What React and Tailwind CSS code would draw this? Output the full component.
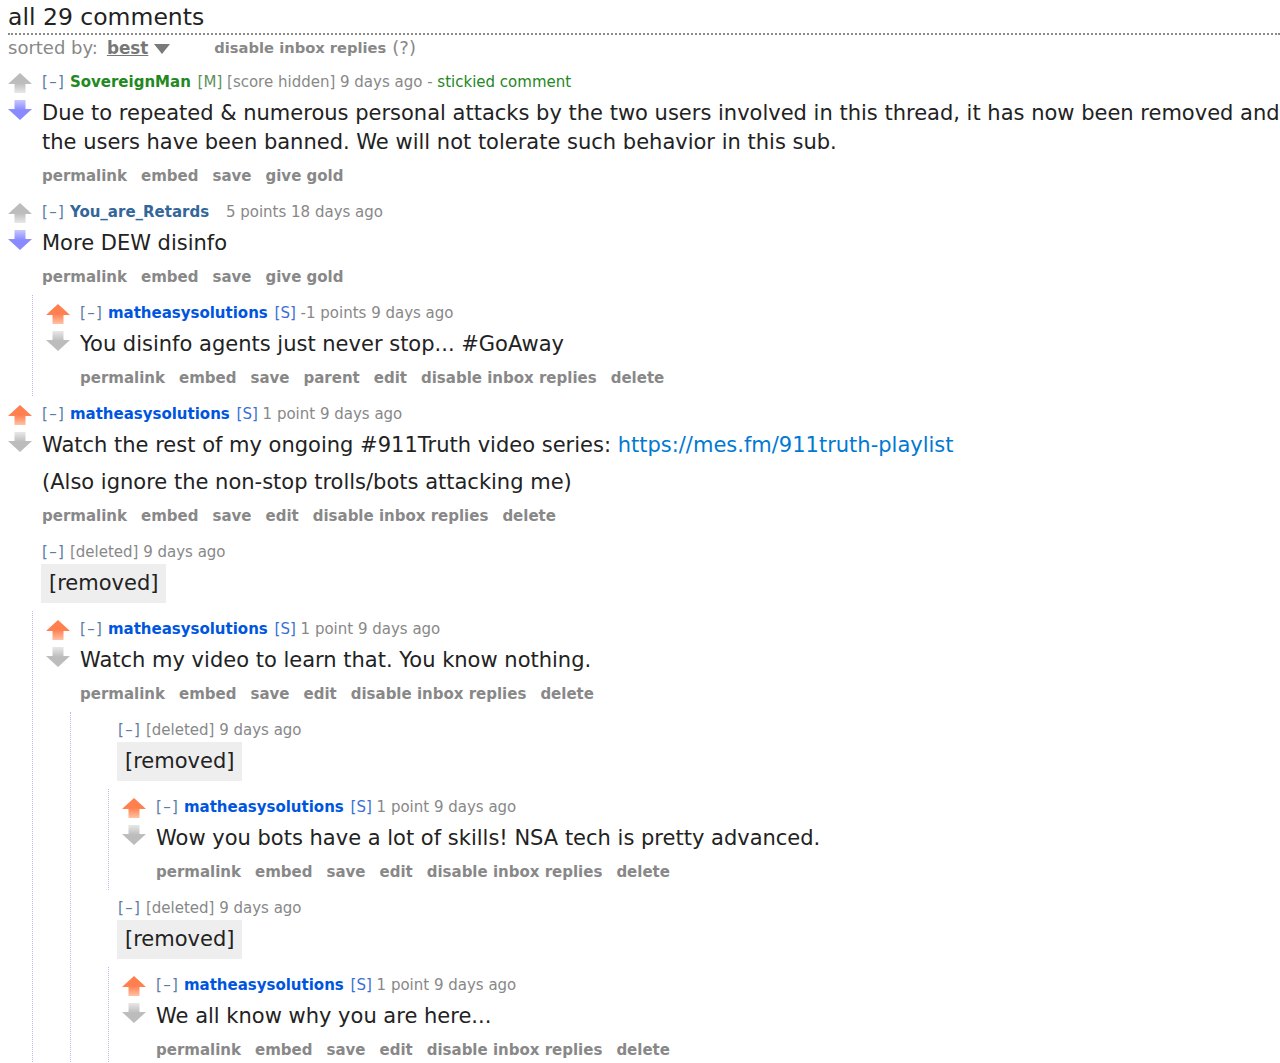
import React, { useId } from "react";

const ARROW = {
  gray: ["#bcbcbc", "#e8e8e8"],
  orange: ["#ff7f4f", "#ffc2a4"],
  purple: ["#8a8aff", "#c8c8ff"],
};

function Arrow({ dir, color }) {
  const raw = useId();
  const id = "g" + raw.replace(/[^a-zA-Z0-9]/g, "");
  const [solid, light] = ARROW[color];
  if (dir === "up") {
    return (
      <svg width="24" height="20" viewBox="0 0 24 20" className="block">
        <defs>
          <linearGradient id={id} x1="0" y1="0" x2="0" y2="1">
            <stop offset="0" stopColor={solid} />
            <stop offset="0.5" stopColor={solid} />
            <stop offset="1" stopColor={light} />
          </linearGradient>
        </defs>
        <path d="M12 0 L24 11 L17.5 11 L17.5 20 L6.5 20 L6.5 11 L0 11 Z" fill={`url(#${id})`} />
      </svg>
    );
  }
  return (
    <svg width="24" height="20" viewBox="0 0 24 20" className="block">
      <defs>
        <linearGradient id={id} x1="0" y1="0" x2="0" y2="1">
          <stop offset="0" stopColor={light} />
          <stop offset="0.5" stopColor={solid} />
          <stop offset="1" stopColor={solid} />
        </linearGradient>
      </defs>
      <path d="M6.5 0 L17.5 0 L17.5 9 L24 9 L12 20 L0 9 L6.5 9 Z" fill={`url(#${id})`} />
    </svg>
  );
}

const OWN = ["permalink", "embed", "save", "edit", "disable inbox replies", "delete"];

const data = [
  {
    author: "SovereignMan",
    authorCls: "text-[#228822]",
    attr: "[M]",
    attrCls: "text-[#5e8f5e]",
    meta: "[score hidden] 9 days ago",
    stickied: true,
    up: "gray",
    down: "purple",
    nowrap: true,
    body: [
      <>
        Due to repeated &amp; numerous personal attacks by the two users involved in this thread, it has now been removed and
        <br />
        the users have been banned. We will not tolerate such behavior in this sub.
      </>,
    ],
    buttons: ["permalink", "embed", "save", "give gold"],
  },
  {
    author: "You_are_Retards",
    authorCls: "text-[#336699]",
    meta: "5 points 18 days ago",
    up: "gray",
    down: "purple",
    body: ["More DEW disinfo"],
    buttons: ["permalink", "embed", "save", "give gold"],
    children: [
      {
        author: "matheasysolutions",
        authorCls: "text-[#0055df]",
        attr: "[S]",
        attrCls: "text-[#3a6fd6]",
        meta: "-1 points 9 days ago",
        up: "orange",
        down: "gray",
        body: ["You disinfo agents just never stop... #GoAway"],
        buttons: ["permalink", "embed", "save", "parent", "edit", "disable inbox replies", "delete"],
      },
    ],
  },
  {
    author: "matheasysolutions",
    authorCls: "text-[#0055df]",
    attr: "[S]",
    attrCls: "text-[#3a6fd6]",
    meta: "1 point 9 days ago",
    up: "orange",
    down: "gray",
    body: [
      <>
        Watch the rest of my ongoing #911Truth video series:{" "}
        <span className="text-[#0079d3]">https://mes.fm/911truth-playlist</span>
      </>,
      "(Also ignore the non-stop trolls/bots attacking me)",
    ],
    buttons: OWN,
  },
  {
    deleted: true,
    children: [
      {
        author: "matheasysolutions",
        authorCls: "text-[#0055df]",
        attr: "[S]",
        attrCls: "text-[#3a6fd6]",
        meta: "1 point 9 days ago",
        up: "orange",
        down: "gray",
        body: ["Watch my video to learn that. You know nothing."],
        buttons: OWN,
        children: [
          {
            deleted: true,
            children: [
              {
                author: "matheasysolutions",
                authorCls: "text-[#0055df]",
                attr: "[S]",
                attrCls: "text-[#3a6fd6]",
                meta: "1 point 9 days ago",
                up: "orange",
                down: "gray",
                body: ["Wow you bots have a lot of skills! NSA tech is pretty advanced."],
                buttons: OWN,
              },
            ],
          },
          {
            deleted: true,
            children: [
              {
                author: "matheasysolutions",
                authorCls: "text-[#0055df]",
                attr: "[S]",
                attrCls: "text-[#3a6fd6]",
                meta: "1 point 9 days ago",
                up: "orange",
                down: "gray",
                body: ["We all know why you are here..."],
                buttons: OWN,
              },
            ],
          },
        ],
      },
    ],
  },
];

function Tagline({ c }) {
  return (
    <div className="whitespace-nowrap text-[15px] leading-[20px] text-[#888]">
      <span className="tracking-[1.3px] text-[#5b7ca6]">[–]</span>{" "}
      {c.deleted ? (
        <span>[deleted]</span>
      ) : (
        <>
          <span className={`font-bold ${c.authorCls}`}>{c.author}</span>
          {c.attr ? (
            <>
              {" "}
              <span className={`ml-[2px] ${c.attrCls}`}>{c.attr}</span>
            </>
          ) : (
            <span className="inline-block w-[12px]" />
          )}
        </>
      )}{" "}
      {c.deleted ? "9 days ago" : c.meta}
      {c.stickied && (
        <>
          {" - "}
          <span className="text-[#228822]">stickied comment</span>
        </>
      )}
    </div>
  );
}

function Comment({ c }) {
  return (
    <div className="pt-[8px]">
      <div className="flex">
        <div className="w-[42px] shrink-0 pl-[8px] pt-[1px]">
          {!c.deleted && (
            <div className="flex flex-col gap-[7px]">
              <Arrow dir="up" color={c.up} />
              <Arrow dir="down" color={c.down} />
            </div>
          )}
        </div>
        <div className="min-w-0 flex-1">
          <Tagline c={c} />
          {c.deleted ? (
            <div className="ml-[-1px] mt-[2px] inline-block bg-[#eeeeee] px-[8px] py-[5px] text-[21px] leading-[29px] text-[#222]">
              [removed]
            </div>
          ) : (
            <>
              <div className="mt-[7px] text-[21px] leading-[29px] text-[#222]">
                {c.body.map((p, i) => (
                  <p key={i} className={`${i > 0 ? "mt-[8px]" : ""} ${c.nowrap ? "whitespace-nowrap" : ""}`}>
                    {p}
                  </p>
                ))}
              </div>
              <div className="mt-[9px] flex gap-[14px] whitespace-nowrap text-[15px] font-bold leading-[20px] text-[#888]">
                {c.buttons.map((b) => (
                  <span key={b}>{b}</span>
                ))}
              </div>
            </>
          )}
        </div>
      </div>
      {c.children ? (
        <div className="ml-[32px] mt-[8px] border-l border-dotted border-[#b9b9ee] pl-[5px]">
          {c.children.map((ch, i) => (
            <Comment key={i} c={ch} />
          ))}
        </div>
      ) : (
        <div className="h-[8px]" />
      )}
    </div>
  );
}

export default function App() {
  return (
    <div className="min-h-[1063px] w-[1280px] overflow-hidden bg-white font-['DejaVu_Sans',sans-serif]">
      <div className="ml-[8px] border-b-2 border-dotted border-[#8a8a8a] pb-[2px] pt-[3px] text-[23.5px] leading-[28px] text-[#222]">
        all 29 comments
      </div>
      <div className="ml-[8px] mt-[2px] flex h-[22px] items-center whitespace-nowrap text-[18px] leading-[22px] text-[#888]">
        <span>sorted by:</span>
        <span className="ml-[9px] text-[16.8px] font-bold text-[#777] underline">best</span>
        <svg width="16" height="10" viewBox="0 0 16 10" className="ml-[6px] mt-[1px]">
          <path d="M0 0 L16 0 L8 10 Z" fill="#7a7a7a" />
        </svg>
        <span className="ml-[44px] text-[14.7px] font-bold">disable inbox replies</span>
        <span className="ml-[6px]">(?)</span>
      </div>
      <div className="mt-[5px]">
        {data.map((c, i) => (
          <Comment key={i} c={c} />
        ))}
      </div>
    </div>
  );
}
